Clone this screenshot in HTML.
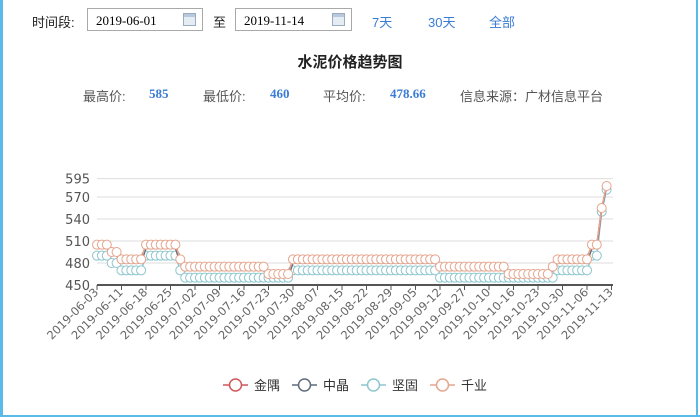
<!DOCTYPE html>
<html><head><meta charset="utf-8"><style>
body{margin:0;width:700px;height:417px;overflow:hidden;background:#fff;font-family:"Liberation Sans","Noto Sans CJK SC",sans-serif;position:relative}
.a{position:absolute;white-space:nowrap}
.inp{position:absolute;border:1px solid #a9a9a9;height:23px;top:8px;font-family:"Liberation Serif","Noto Serif CJK SC",serif;font-size:13px;line-height:23px;padding-left:8px;box-sizing:border-box}
.cal{position:absolute;right:6px;top:4px;width:13px;height:13px;background:linear-gradient(#b9c9dc 0 3px,#e6ecf3 3px);border:1px solid #9aaac0;box-sizing:border-box}
.lnk{color:#3a7bd5;font-size:13px;top:12px}
.g{color:#555;font-size:13px;top:86px}
.b{color:#3a7bd5;font-size:13px;top:86px;font-weight:bold;font-family:"Liberation Serif",serif}
</style></head><body>
<div style="position:absolute;left:0;top:0;width:3px;height:417px;background:#5bbbe8"></div>
<div style="position:absolute;right:2px;top:0;width:2px;height:417px;background:#5bbbe8"></div>
<div style="position:absolute;left:0;bottom:0;width:700px;height:2px;background:#5bbbe8"></div>
<div class="a" style="left:32px;top:12px;font-size:13px;color:#222">时间段:</div>
<div class="inp" style="left:87px;width:116px">2019-06-01<div class="cal"></div></div>
<div class="a" style="left:213px;top:12px;font-size:13px;color:#222">至</div>
<div class="inp" style="left:235px;width:117px">2019-11-14<div class="cal"></div></div>
<div class="a lnk" style="left:372px">7天</div>
<div class="a lnk" style="left:428px">30天</div>
<div class="a lnk" style="left:489px">全部</div>
<div class="a" style="left:0;width:700px;text-align:center;top:51px;font-size:15px;font-weight:bold;color:#222">水泥价格趋势图</div>
<div class="a g" style="left:83px">最高价:</div><div class="a b" style="left:149px">585</div>
<div class="a g" style="left:203px">最低价:</div><div class="a b" style="left:270px">460</div>
<div class="a g" style="left:323px">平均价:</div><div class="a b" style="left:390px">478.66</div>
<div class="a g" style="left:460px">信息来源：广材信息平台</div>
<svg id="c" width="700" height="417" style="position:absolute;left:0;top:0" font-family="DejaVu Sans, Noto Sans CJK SC, sans-serif"></svg>
<script>
var s='',Y=function(v){return 285-(v-450)*22/30};
[595,570,540,510,480].forEach(function(v){s+='<line x1="97" x2="613" y1="'+Y(v)+'" y2="'+Y(v)+'" stroke="#ddd"/>'});
[595,570,540,510,480,450].forEach(function(v){s+='<text x="90" y="'+(Y(v)+5)+'" text-anchor="end" font-size="13" fill="#555">'+v+'</text>'});
s+='<line x1="97" x2="613" y1="285" y2="285" stroke="#555" stroke-width="2"/>';
var L=['06-03','06-11','06-18','06-25','07-02','07-09','07-16','07-23','07-30','08-07','08-15','08-22','08-29','09-05','09-12','09-27','10-10','10-16','10-23','10-30','11-06','11-13'];
L.forEach(function(d,i){var x=97+i*24.5;s+='<line x1="'+x+'" x2="'+x+'" y1="285" y2="290" stroke="#555"/>';s+='<text transform="translate('+(x+2)+',293) rotate(-45)" text-anchor="end" font-size="11.5" fill="#666">2019-'+d+'</text>'});
var seg=[[3,505],[2,495],[5,485],[7,505],[1,485],[17,475],[5,465],[30,485],[14,475],[9,465],[1,475],[7,485],[2,505],[1,555],[1,585]];
var o=[];seg.forEach(function(a){for(var k=0;k<a[0];k++)o.push(a[1])});
function ser(off,col,circ){var p='',c='';o.forEach(function(v,i){var w=Math.max(460,v-off);if(i>=o.length-2)w=v-off/3;var x=97+i*4.9,y=Y(w);p+=(i?'L':'M')+x+' '+y;if(circ)c+='<circle cx="'+x+'" cy="'+y+'" r="4.5" fill="#fff" stroke="'+col+'"/>'});return '<path d="'+p+'" fill="none" stroke="'+col+'" stroke-width="1.5"/>'+c}
s+=ser(15,'#8cc6cf',1)+ser(5,'#5e6c7d',0)+ser(0,'#c23531',0)+ser(0,'#e5a58e',1);
var lg=[[223,'#d1555a','金隅'],[292,'#5e6c7d','中晶'],[361,'#8cc6cf','坚固'],[430,'#e5a58e','千业']];
lg.forEach(function(a){s+='<line x1="'+a[0]+'" x2="'+(a[0]+25)+'" y1="385" y2="385" stroke="'+a[1]+'" stroke-width="1.5"/><circle cx="'+(a[0]+12.5)+'" cy="385" r="6" fill="#fff" stroke="'+a[1]+'" stroke-width="1.5"/><text x="'+(a[0]+31)+'" y="390" font-size="13" fill="#333">'+a[2]+'</text>'});
document.getElementById('c').innerHTML=s;
</script>
</body></html>
